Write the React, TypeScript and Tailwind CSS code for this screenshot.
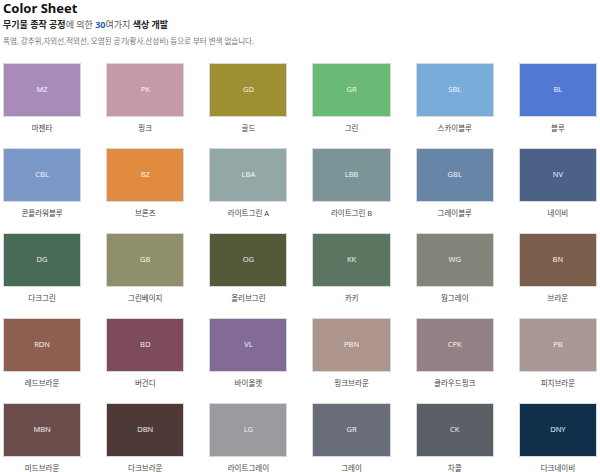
const colors: [string, string, string][] = [
  ["MZ", "마젠타", "#a98bbb"],
  ["PK", "핑크", "#c39aa5"],
  ["GD", "골드", "#9c9033"],
  ["GR", "그린", "#6aba76"],
  ["SBL", "스카이블루", "#79acd9"],
  ["BL", "블루", "#5279d2"],
  ["CBL", "콘플라워블루", "#7b98c9"],
  ["BZ", "브론즈", "#e08b3f"],
  ["LBA", "라이트그린 A", "#93a8a6"],
  ["LBB", "라이트그린 B", "#7a9497"],
  ["GBL", "그레이블루", "#6785a6"],
  ["NV", "네이비", "#4b6286"],
  ["DG", "다크그린", "#4a6a58"],
  ["GB", "그린베이지", "#8f8f69"],
  ["OG", "올리브그린", "#525a3a"],
  ["KK", "카키", "#5c7561"],
  ["WG", "웜그레이", "#84847a"],
  ["BN", "브라운", "#7a5d4a"],
  ["RDN", "레드브라운", "#8e5f51"],
  ["BD", "버건디", "#7e4b5c"],
  ["VL", "바이올렛", "#836b97"],
  ["PBN", "핑크브라운", "#ad948d"],
  ["CPK", "클라우드핑크", "#948186"],
  ["PB", "피치브라운", "#a99796"],
  ["MBN", "미드브라운", "#6a4d4a"],
  ["DBN", "다크브라운", "#4f3936"],
  ["LG", "라이트그레이", "#9a9b9f"],
  ["GR", "그레이", "#686d79"],
  ["CK", "차콜", "#5b5f66"],
  ["DNY", "다크네이비", "#0f2f4b"],
];

export default function App() {
  return (
    <div className="w-[600px] h-[472px] overflow-hidden bg-white px-[3px]" style={{ fontFamily: '"Noto Sans", "Noto Sans CJK KR", sans-serif' }}>
      <h1 className="text-[13px] font-bold text-[#111] leading-[17px]">Color Sheet</h1>
      <p className="mt-[2px] text-[9px] font-bold text-[#222] leading-[12px]">
        무기물 종작 공정<span className="font-normal text-[#555]">에 의한 </span>
        <span className="text-[#1d5fb8]">30</span>
        <span className="font-normal text-[#555]">여가지 </span>색상 개발
      </p>
      <p className="mt-[5px] text-[7.5px] text-[#777] leading-[10px]">
        폭염, 강추위,자외선,적외선, 오염된 공기(황사,산성비) 등으로 부터 변색 없습니다.
      </p>
      <div className="mt-[17px] grid grid-cols-6 gap-x-[25px] gap-y-[13px]">
        {colors.map(([code, name, bg], i) => (
          <div key={i} className="flex flex-col items-center">
            <div className="w-full h-[54px] border border-[#d8d8d8] flex items-center justify-center text-[7.5px] text-white/90" style={{ backgroundColor: bg }}>
              {code}
            </div>
            <div className="mt-[4px] text-[7.5px] text-[#444] leading-[14px]">{name}</div>
          </div>
        ))}
      </div>
    </div>
  );
}
